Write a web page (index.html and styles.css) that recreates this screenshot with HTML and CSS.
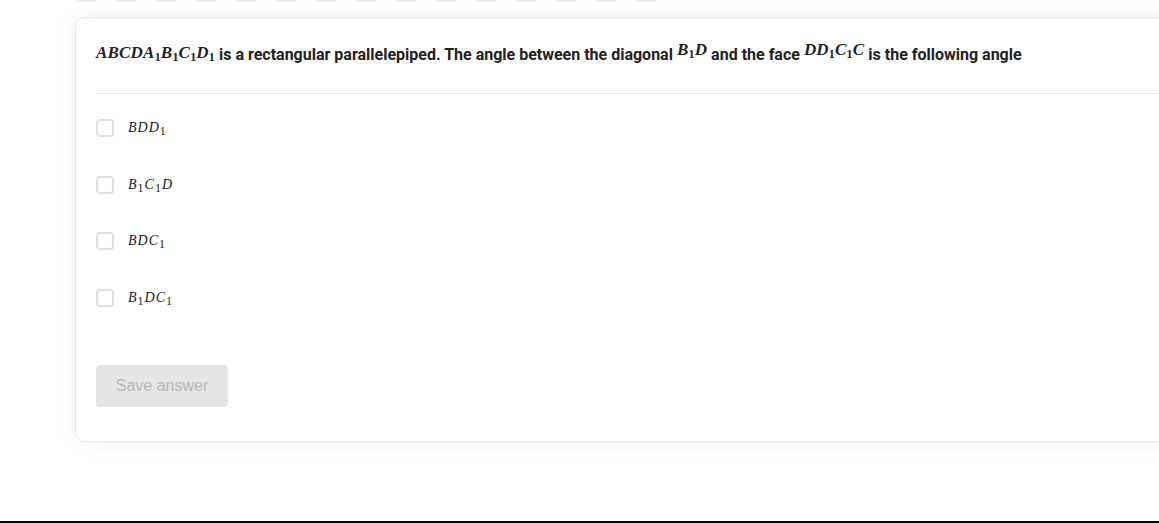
FILE: index.html
```html
<!DOCTYPE html>
<html lang="en">
<head>
	<meta charset="UTF-8">
	<title>Question</title>
	<link rel="stylesheet" href="styles.css">
</head>
<body>
<div class="page">
	<div class="steps">
		<span></span><span></span><span></span><span></span><span></span>
		<span></span><span></span><span></span><span></span><span></span>
		<span></span><span></span><span></span><span></span><span></span>
	</div>

	<div class="card">
		<div class="question">
			<span class="math">ABCDA<sub>1</sub>B<sub>1</sub>C<sub>1</sub>D<sub>1</sub></span> is a rectangular parallelepiped. The angle between the diagonal <span class="math up">B<sub>1</sub>D</span> and the face <span class="math up">DD<sub>1</sub>C<sub>1</sub>C</span> is the following angle
		</div>

		<ul class="options">
			<li class="option"><span class="check"></span><span class="label">BDD<sub>1</sub></span></li>
			<li class="option"><span class="check"></span><span class="label">B<sub>1</sub>C<sub>1</sub>D</span></li>
			<li class="option"><span class="check"></span><span class="label">BDC<sub>1</sub></span></li>
			<li class="option"><span class="check"></span><span class="label">B<sub>1</sub>DC<sub>1</sub></span></li>
		</ul>

		<button class="save" disabled>Save answer</button>
	</div>
</div>
</body>
</html>
```

FILE: styles.css
```css
html,body{
	margin: 0;
	padding: 0;
	background-color: #fff;
	overflow: hidden;
}
.page{
	height: 521px;
	border-bottom: 2px solid #000;
	overflow: hidden;
}
.steps{
	display: flex;
	gap: 20px;
	height: 2px;
	padding-left: 76px;
	overflow: hidden;
}
.steps span{
	width: 20px;
	height: 2px;
	background-color: #ececec;
	border-radius: 0 0 2px 2px;
}
.card{
	width: 1140px;
	margin: 15px 0 0 75px;
	padding: 20px 20px 34px;
	background-color: #fff;
	border: 1px solid #e9e9e9;
	border-radius: 10px;
	box-shadow: 0 0 22px rgba(0,0,0,.06);
}
.question{
	font-family: Roboto, "Liberation Sans", sans-serif;
	font-weight: bold;
	font-size: 16px;
	line-height: 24px;
	color: #222;
	padding: 5px 0 26px;
	border-bottom: 1px solid #e8e8e8;
}
.math{
	font-family: "Liberation Serif", serif;
	font-style: italic;
	font-weight: bold;
	font-size: 17px;
	letter-spacing: .2px;
	position: relative;
	top: -2px;
}
.math.up{
	top: -5px;
}
.math sub,
.label sub{
	font-style: normal;
	font-size: 12px;
	vertical-align: -3px;
	line-height: 0;
}
.options{
	list-style: none;
	margin: 0;
	padding: 25px 0 0;
}
.option{
	display: flex;
	align-items: center;
	gap: 14px;
	height: 18px;
	margin-bottom: 38.7px;
}
.option:last-child{
	margin-bottom: 0;
}
.check{
	box-sizing: border-box;
	width: 18px;
	height: 18px;
	border: 2px solid #e0e0e0;
	border-radius: 4px;
}
.label{
	font-family: "Liberation Serif", serif;
	font-style: italic;
	font-size: 14px;
	letter-spacing: 1px;
	color: #222;
}
.save{
	display: block;
	width: 132px;
	height: 42px;
	margin-top: 58px;
	border: none;
	border-radius: 4px;
	background-color: #e5e5e5;
	color: #b9b9b9;
	font-family: "Liberation Sans", Arial, sans-serif;
	font-size: 16px;
}
```
